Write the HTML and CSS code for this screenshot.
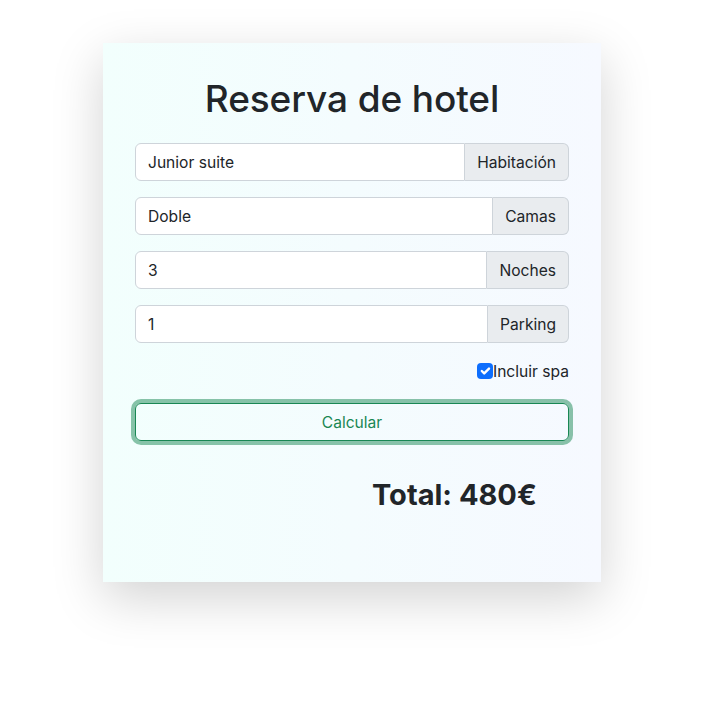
FILE: index.html
```html
<!DOCTYPE html>
<html lang="es">
<head>
<meta charset="utf-8">
<title>Reserva de hotel</title>
<link rel="stylesheet" href="styles.css">
</head>
<body>
<div class="page">
  <div class="card">
    <h1 class="title">Reserva de hotel</h1>
    <div class="input-group">
      <input class="form-control" type="text" value="Junior suite">
      <span class="addon">Habitación</span>
    </div>
    <div class="input-group">
      <input class="form-control" type="text" value="Doble">
      <span class="addon">Camas</span>
    </div>
    <div class="input-group">
      <input class="form-control" type="text" value="3">
      <span class="addon">Noches</span>
    </div>
    <div class="input-group">
      <input class="form-control" type="text" value="1">
      <span class="addon">Parking</span>
    </div>
    <div class="check-row">
      <label class="check">
        <span class="box"><svg viewBox="0 0 20 20" width="16" height="16"><path d="M6 10l3 3 6-6" fill="none" stroke="#fff" stroke-width="3" stroke-linecap="round" stroke-linejoin="round"/></svg></span>
        <span class="check-label">Incluir spa</span>
      </label>
    </div>
    <button class="btn" type="button">Calcular</button>
    <div class="total-row">
      <h2 class="total">Total: 480€</h2>
    </div>
  </div>
</div>
</body>
</html>
```

FILE: styles.css
```css
* { box-sizing: border-box; }
html, body { margin: 0; padding: 0; background: #fff; }
body {
  font-family: Inter, "Noto Sans", sans-serif;
  color: #212529;
  font-size: 16px;
}
.page {
  min-height: 712px;
  padding: 43px 0 0 103px;
}
.card {
  width: 498px;
  height: 539px;
  padding: 32px 32px;
  background: linear-gradient(to right, #f2fffd, #f6f9ff);
  box-shadow: 0 16px 48px rgba(0, 0, 0, 0.175);
}
.title {
  margin: 0 0 20px;
  text-align: center;
  font-size: 37px;
  font-weight: 500;
  line-height: 48px;
  letter-spacing: -0.1px;
}
.input-group {
  display: flex;
  height: 38px;
  margin-bottom: 16px;
}
.form-control {
  flex: 1;
  min-width: 0;
  font: inherit;
  font-size: 15.6px;
  color: #212529;
  padding: 6px 12px;
  border: 1px solid #ced4da;
  border-radius: 6px 0 0 6px;
  background: #fff;
}
.addon {
  display: flex;
  align-items: center;
  padding: 6px 12px;
  font-size: 15.6px;
  background: #e9ecef;
  border: 1px solid #ced4da;
  border-left: 0;
  border-radius: 0 6px 6px 0;
  white-space: nowrap;
}
.check-row {
  display: flex;
  justify-content: flex-end;
  margin: 0 0 20px;
}
.check {
  display: flex;
  align-items: center;
  height: 24px;
  font-size: 15.6px;
}
.box {
  width: 16px;
  height: 16px;
  background: #0d6efd;
  border-radius: 4px;
  display: flex;
}
.btn {
  display: block;
  width: 100%;
  height: 38px;
  font: inherit;
  font-size: 15.6px;
  color: #198754;
  background: transparent;
  border: 1px solid #198754;
  border-radius: 6px;
  box-shadow: 0 0 0 4px rgba(25, 135, 84, 0.5);
}
.total-row {
  padding-left: 237px;
  margin-top: 36px;
}
.total {
  margin: 0;
  font-size: 29px;
  font-weight: 700;
  line-height: 36px;
}
```
